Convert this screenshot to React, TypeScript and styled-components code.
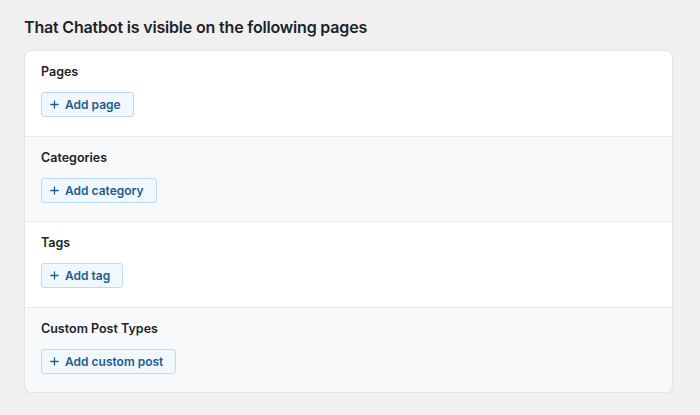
import React from 'react';
import styled, {createGlobalStyle} from 'styled-components';

const GlobalStyle = createGlobalStyle`
  html, body {
    margin: 0;
    padding: 0;
    background: #f0f0f1;
  }
  body {
    font-family: Inter, "Noto Sans", Arial, sans-serif;
    color: #1d2327;
  }
`;

const Page = styled.div`
  padding: 17px 27px 0 24px;
`;

const Heading = styled.h2`
  margin: 0 0 13px 0;
  font-size: 16px;
  line-height: 20px;
  font-weight: 600;
  letter-spacing: -0.18px;
  color: #1d2327;
`;

const Card = styled.div`
  background: #fff;
  border: 1px solid #e2e4e7;
  border-radius: 8px;
  box-shadow: 0 1px 2px rgba(0, 0, 0, 0.04);
  overflow: hidden;
`;

const Section = styled.div<{$shaded?: boolean}>`
  padding: 13px 16px 18.5px;
  background: ${p => (p.$shaded ? '#f8f9fa' : '#fff')};
  & + & {
    border-top: 1px solid #e9eaec;
  }
`;

const Label = styled.div`
  font-size: 12.5px;
  line-height: 16px;
  font-weight: 600;
  color: #1d2327;
  margin-bottom: 12px;
`;

const AddButton = styled.button`
  display: inline-flex;
  align-items: center;
  gap: 6px;
  height: 25px;
  padding: 0 12px 0 8px;
  background: #f0f8fe;
  border: 1px solid #b9ddf5;
  border-radius: 3px;
  color: #1f5b91;
  font-family: inherit;
  font-size: 12px;
  font-weight: 600;
  cursor: pointer;

  svg {
    width: 9px;
    height: 9px;
  }
`;

const Plus = () => (
  <svg viewBox="0 0 10 10" fill="none" stroke="currentColor" strokeWidth="1.4" strokeLinecap="round">
    <path d="M5 1v8M1 5h8"/>
  </svg>
);

const sections = [
  {label: 'Pages', button: 'Add page'},
  {label: 'Categories', button: 'Add category'},
  {label: 'Tags', button: 'Add tag'},
  {label: 'Custom Post Types', button: 'Add custom post'},
];

const App = () => (
  <>
    <GlobalStyle/>
    <Page>
      <Heading>That Chatbot is visible on the following pages</Heading>
      <Card>
        {sections.map((s, i) => (
          <Section key={s.label} $shaded={i % 2 === 1}>
            <Label>{s.label}</Label>
            <AddButton type="button"><Plus/>{s.button}</AddButton>
          </Section>
        ))}
      </Card>
    </Page>
  </>
);

export default App;
